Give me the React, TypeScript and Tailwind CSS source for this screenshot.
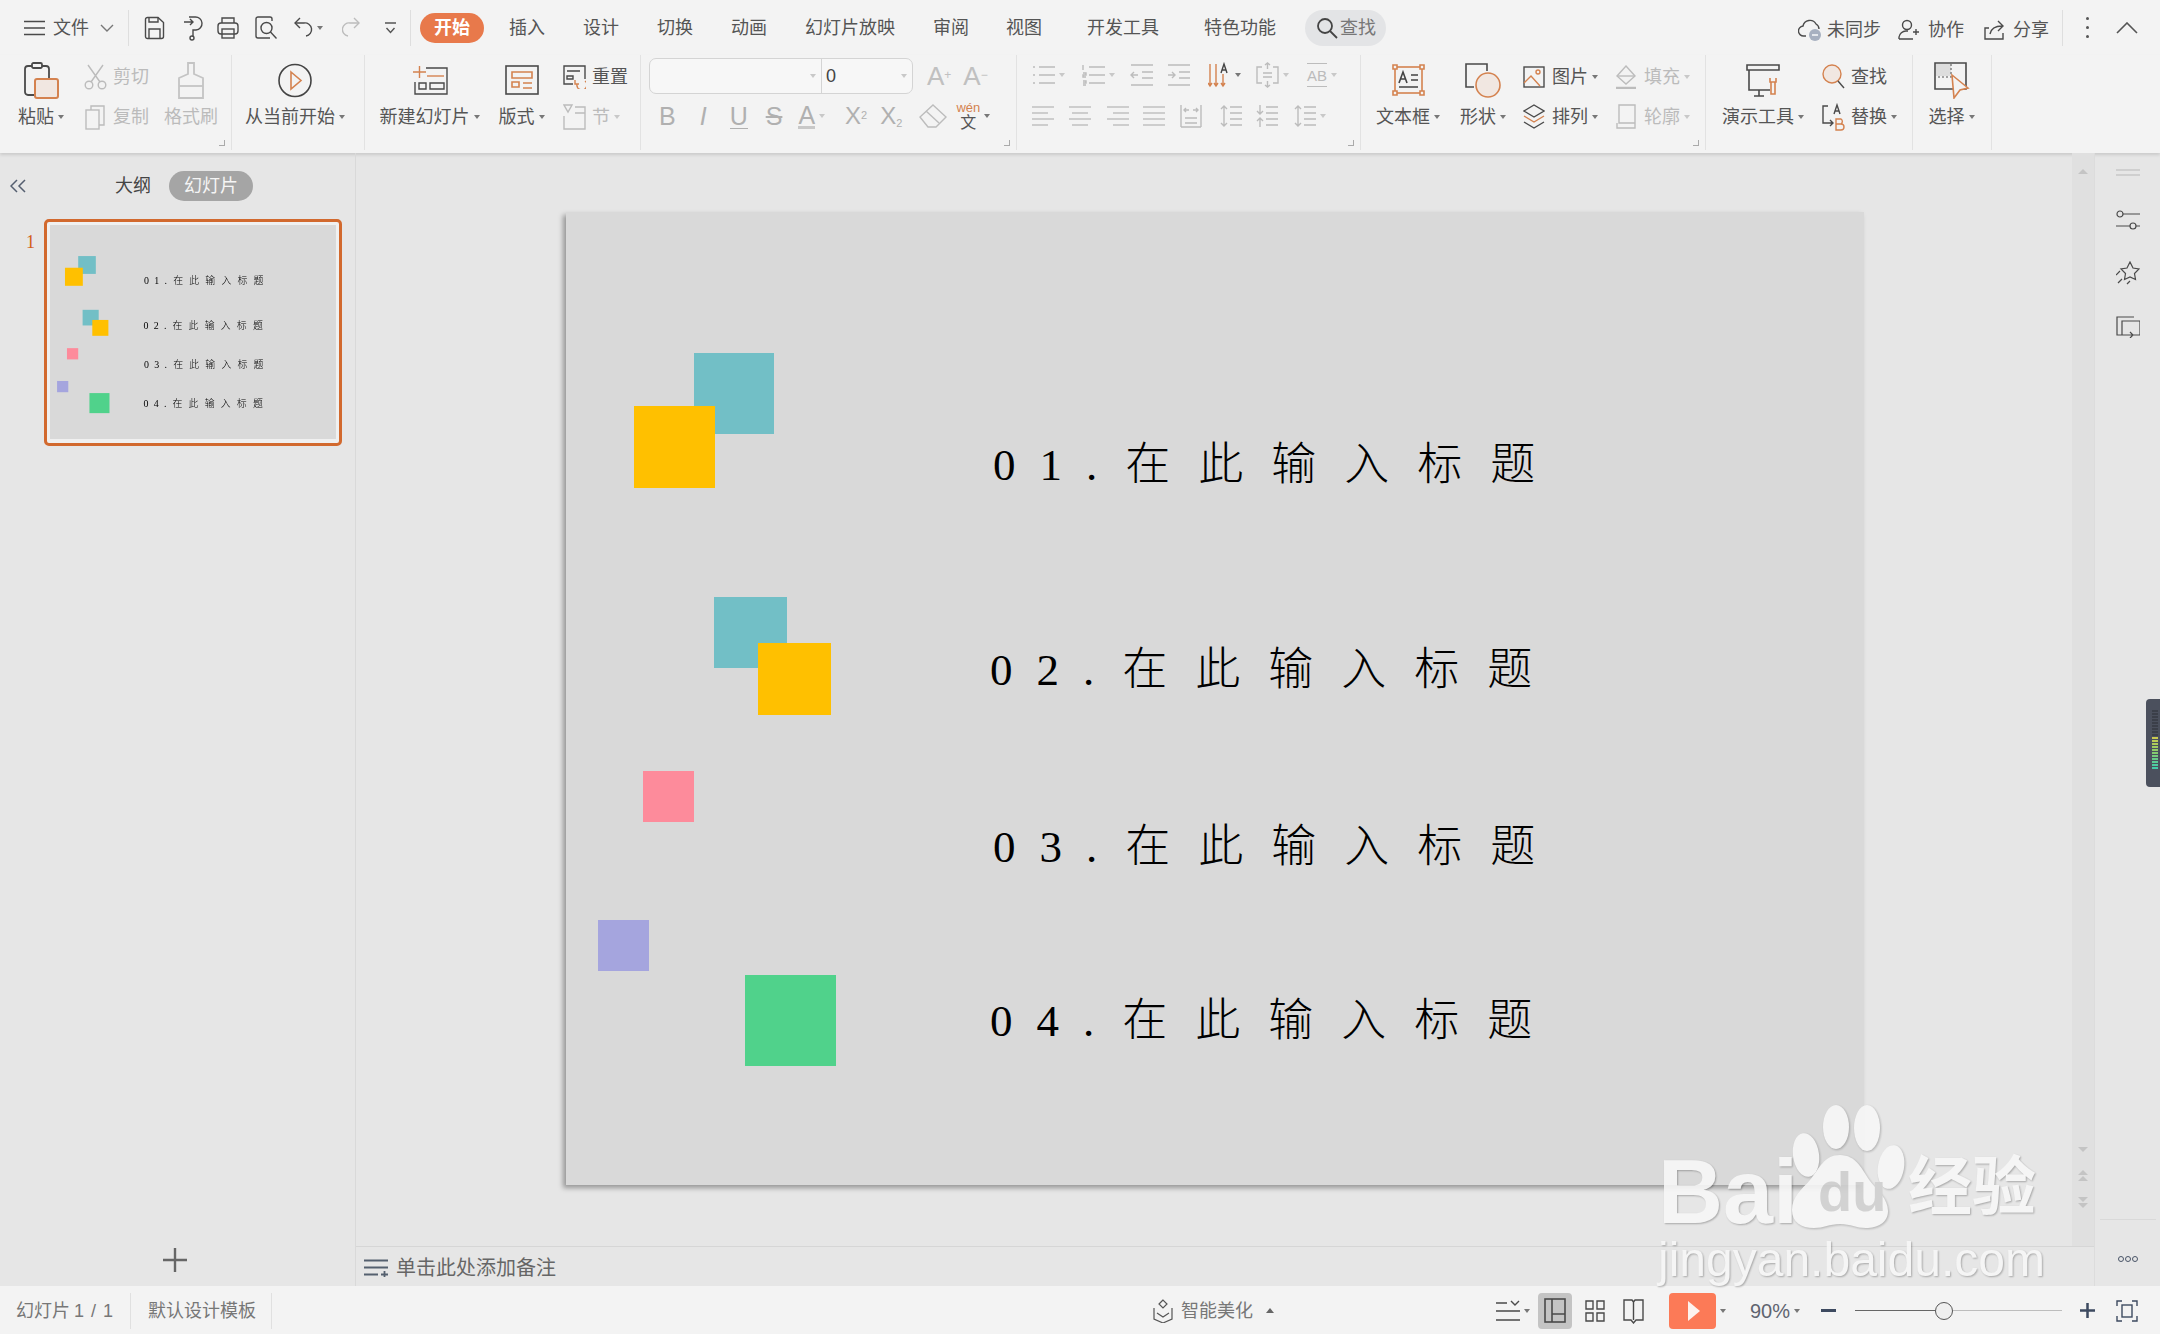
import type { ReactNode } from 'react';

const DARK = '#4a4a4a';
const GRAY = '#bcbcbc';
const ORANGE = '#d4824f';

function Ico({ w, h, c = DARK, sw = 1.4, children }: { w: number; h: number; c?: string; sw?: number; children: ReactNode }) {
  return (
    <svg width={w} height={h} viewBox={`0 0 ${w} ${h}`} fill="none" stroke={c} strokeWidth={sw} className="shrink-0">
      {children}
    </svg>
  );
}

function Caret({ gray }: { gray?: boolean }) {
  return (
    <span
      className={
        gray
          ? 'ml-[4px] inline-block shrink-0 border-x-[3.5px] border-t-[4px] border-x-transparent border-t-[#c8c8c8]'
          : 'ml-[4px] inline-block shrink-0 border-x-[3.5px] border-t-[4px] border-x-transparent border-t-[#777777]'
      }
    />
  );
}

function Corner() {
  return <span className="absolute bottom-[4px] right-[6px] h-[6px] w-[6px] border-b border-r border-[#aaaaaa]" />;
}

function Large({ icon, label, w, gray, caret = true, className = '' }: { icon: ReactNode; label: string; w: string; gray?: boolean; caret?: boolean; className?: string }) {
  return (
    <div className={`flex flex-col items-center ${w} ${className}`}>
      <div className="mt-[2px] flex h-[46px] items-center justify-center">{icon}</div>
      <div className={gray ? 'flex h-[28px] items-center whitespace-nowrap text-[#bbbbbb]' : 'flex h-[28px] items-center whitespace-nowrap text-[#555555]'}>
        {label}
        {caret && <Caret />}
      </div>
    </div>
  );
}

function Small({ icon, label, gray, caret }: { icon: ReactNode; label: string; gray?: boolean; caret?: boolean }) {
  return (
    <div className={gray ? 'flex h-[34px] items-center gap-[7px] text-[#bbbbbb]' : 'flex h-[34px] items-center gap-[7px] text-[#555555]'}>
      <span className="flex w-[22px] justify-center">{icon}</span>
      <span className="flex items-center whitespace-nowrap">
        {label}
        {caret && <Caret gray={gray} />}
      </span>
    </div>
  );
}

function SmallCol({ children, className = '' }: { children: ReactNode; className?: string }) {
  return <div className={`flex flex-col gap-[6px] pt-[5px] ${className}`}>{children}</div>;
}

function Lines({ rows, c = GRAY, w = 22 }: { rows: [number, number][]; c?: string; w?: number }) {
  return (
    <Ico w={w} h={24} c={c}>
      {rows.map(([a, b], i) => (
        <path key={i} d={`M${a} ${3 + i * (18 / (rows.length - 1))}H${b}`} />
      ))}
    </Ico>
  );
}

const SAVE = (
  <Ico w={21} h={24}>
    <path d="M4 1.5h10l5.5 5v14a2 2 0 0 1-2 2h-14a2 2 0 0 1-2-2v-17a2 2 0 0 1 2-2z" />
    <path d="M5 1.5v4.5h9V1.5M5 22v-9h11v9" />
  </Ico>
);

const OUTPUT = (
  <Ico w={21} h={26}>
    <path d="M1 7h9M7 4l3 3-3 3" />
    <path d="M6 2h6a6.500 6.500 0 0 1 1 13h-3v7" />
    <circle cx={9} cy={23} r={2} />
  </Ico>
);

const PRINT = (
  <Ico w={22} h={24}>
    <path d="M5 7V2h12v5" />
    <rect x={1} y={7} width={20} height={11} rx={3} />
    <rect x={5} y={13} width={12} height={9} />
  </Ico>
);

const PREVIEW = (
  <Ico w={24} h={24}>
    <path d="M16 22H4a2 2 0 0 1-2-2V3a2 2 0 0 1 2-2h12a2 2 0 0 1 2 2v2" />
    <circle cx={12.5} cy={12} r={5.5} />
    <path d="M16.500 16l6 6.500" />
  </Ico>
);

const UNDO = (
  <Ico w={20} h={24}>
    <path d="M7 2L2 7l5 5" />
    <path d="M2 7h9a6.500 6.500 0 0 1 2 13" />
  </Ico>
);

const REDO = (
  <Ico w={18} h={24} c={GRAY}>
    <path d="M12 2l5 5-5 5" />
    <path d="M17 7H8a6 6 0 0 0-2 13" />
  </Ico>
);

export default function App() {
  return (
    <div className="relative flex h-[1334px] w-[2160px] flex-col overflow-hidden bg-[#e6e6e6] font-['Liberation_Sans','Noto_Sans_CJK_SC',sans-serif] text-[18px] leading-none text-[#555555]">
      <TitleRow />
      <Ribbon />
      <div className="flex min-h-0 flex-1">
        <LeftPanel />
        <div className="flex min-w-0 flex-1 flex-col">
          <div className="flex min-h-0 flex-1">
            <div className="flex-1 pl-[210px] pt-[59px]">
              <div className="w-fit shadow-[-3px_3px_5px_rgba(0,0,0,0.35)]">
                <Slide />
              </div>
            </div>
            <ScrollBar />
          </div>
          <div className="flex h-[40px] items-center gap-[8px] border-t border-[#d6d6d6] pl-[8px] pt-[2px] text-[20px] text-[#666666]">
            <Ico w={24} h={18} c="#55606f" sw={1.8}>
              <path d="M0 1.500h24M0 8.500h24M0 15.500h14M17 15.500h7M20.500 12v7" />
            </Ico>
            单击此处添加备注
          </div>
        </div>
        <SidePanel />
      </div>
      <StatusBar />
      <Watermark />
      <div className="absolute left-[2146px] top-[699px] flex h-[88px] w-[14px] flex-col gap-[1px] rounded-l-[4px] bg-[#4b505d] pl-[6px] pt-[11px]">
        {['#3b3f49', '#3b3f49', '#3b3f49', '#3b3f49', '#3b3f49', '#3b3f49', '#3b3f49', '#3b3f49', '#3b3f49', '#c9c950', '#bccb55', '#aecb5a', '#a0cc60', '#92cc68', '#84cc70', '#76cc7c', '#68cc88', '#5acb94', '#4ecba0', '#44caa8'].map((color, i) => (
          <span key={i} className="h-[2px] w-[6px] shrink-0" style={{ backgroundColor: color }} />
        ))}
      </div>
    </div>
  );
}

function TitleRow() {
  return (
    <div className="flex h-[55px] shrink-0 items-center bg-[#f3f3f3] pl-[24px] pr-[22px]">
      <Ico w={21} h={16} sw={1.6}>
        <path d="M0 1.500h21M0 8h21M0 14.500h21" />
      </Ico>
      <span className="ml-[8px]">文件</span>
      <span className="ml-[11px]">
        <Ico w={14} h={8} c="#777777">
          <path d="M1 1l6 6 6-6" />
        </Ico>
      </span>
      <span className="ml-[14px] h-[36px] w-px bg-[#dedede]" />
      <span className="ml-[15px]">{SAVE}</span>
      <span className="ml-[18px]">{OUTPUT}</span>
      <span className="ml-[13px]">{PRINT}</span>
      <span className="ml-[15px]">{PREVIEW}</span>
      <span className="ml-[15px]">{UNDO}</span>
      <Caret />
      <span className="ml-[19px]">{REDO}</span>
      <span className="ml-[25px]">
        <Ico w={11} h={16} c="#555555">
          <path d="M0 3h11M1.500 8l4 4.500 4-4.500" />
        </Ico>
      </span>
      <span className="ml-[14px] h-[36px] w-px bg-[#dedede]" />
      <span className="ml-[9px] flex h-[30px] w-[64px] items-center justify-center rounded-full bg-[#e8794b] font-bold text-white">开始</span>
      <span className="ml-[25px]">插入</span>
      <span className="ml-[38px]">设计</span>
      <span className="ml-[38px]">切换</span>
      <span className="ml-[38px]">动画</span>
      <span className="ml-[38px]">幻灯片放映</span>
      <span className="ml-[38px]">审阅</span>
      <span className="ml-[37px]">视图</span>
      <span className="ml-[45px]">开发工具</span>
      <span className="ml-[45px]">特色功能</span>
      <span className="ml-[29px] flex h-[36px] w-[81px] items-center gap-[2px] rounded-full bg-[#e3e4e6] pl-[11px] text-[#777777]">
        <Ico w={22} h={22} c="#444444" sw={1.8}>
          <circle cx={9} cy={9} r={7} />
          <path d="M14 14l7 7" />
        </Ico>
        查找
      </span>
      <span className="ml-auto flex items-center pt-[4px]">
        <Ico w={25} h={25}>
          <path d="M8 19H6a5 5 0 0 1-1-10 7 7 0 0 1 13-2 6 6 0 0 1 3 5" />
          <circle cx={17} cy={18} r={6} fill="#a7b0c0" stroke="none" />
          <path d="M14 18h6" stroke="#ffffff" />
        </Ico>
        <span className="ml-[4px]">未同步</span>
        <span className="ml-[17px]">
          <Ico w={21} h={21}>
            <circle cx={9} cy={6} r={4.5} />
            <path d="M1 20v-2a7 7 0 0 1 7-6h2M15 13h6M18 10v6M1 20h14" />
          </Ico>
        </span>
        <span className="ml-[9px]">协作</span>
        <span className="ml-[20px]">
          <Ico w={21} h={21}>
            <path d="M5 9H1v11h18v-6" />
            <path d="M6 15c1-5 5-8 12-8M14 2l5 5-5 5" />
          </Ico>
        </span>
        <span className="ml-[8px]">分享</span>
      </span>
      <span className="ml-[13px] h-[36px] w-px bg-[#dedede]" />
      <span className="ml-[23px] flex flex-col gap-[6px]">
        <span className="h-[3px] w-[3px] rounded-full bg-[#555555]" />
        <span className="h-[3px] w-[3px] rounded-full bg-[#555555]" />
        <span className="h-[3px] w-[3px] rounded-full bg-[#555555]" />
      </span>
      <span className="ml-[27px]">
        <Ico w={22} h={12} c="#555555" sw={1.6}>
          <path d="M1 11L11 1l10 10" />
        </Ico>
      </span>
    </div>
  );
}

function Ribbon() {
  return (
    <div className="flex h-[98px] shrink-0 bg-[#f3f3f3] pb-[3px] shadow-[0_2px_3px_rgba(0,0,0,0.12)]">
      {/* clipboard */}
      <div className="relative flex w-[232px] border-r border-[#e2e2e2] pl-[18px]">
        <Large
          w="w-[46px]"
          label="粘贴"
          icon={
            <Ico w={35} h={37} sw={1.8}>
              <rect x={1} y={4} width={24} height={29} rx={3} />
              <rect x={8} y={1} width={10} height={5} rx={1.5} fill="#f3f3f3" />
              <rect x={11} y={17} width={23} height={19} rx={2} fill="#f1e7e1" stroke={ORANGE} strokeWidth={2} />
            </Ico>
          }
        />
        <SmallCol className="ml-[20px]">
          <Small
            gray
            label="剪切"
            icon={
              <Ico w={23} h={26} c={GRAY}>
                <circle cx={5} cy={21} r={3.8} />
                <circle cx={18} cy={21} r={3.8} />
                <path d="M7 18L19 1M16 18L4 1" />
              </Ico>
            }
          />
          <Small
            gray
            label="复制"
            icon={
              <Ico w={20} h={25} c={GRAY}>
                <path d="M6 5V1h13v19h-5" />
                <rect x={1} y={5} width={13} height={19} />
              </Ico>
            }
          />
        </SmallCol>
        <Large
          gray
          caret={false}
          w="w-[54px]"
          className="ml-[15px]"
          label="格式刷"
          icon={
            <Ico w={28} h={37} c="#c4c4c4" sw={1.8}>
              <path d="M11 1h6v11l9 4v20H2V16l9-4z" />
              <path d="M2 24h24" />
            </Ico>
          }
        />
        <Corner />
      </div>
      {/* start */}
      <div className="flex w-[133px] border-r border-[#e2e2e2] pl-[14px]">
        <Large
          w="w-[98px]"
          label="从当前开始"
          icon={
            <Ico w={34} h={35} c="#444444" sw={1.6}>
              <circle cx={17} cy={17.5} r={16} />
              <path d="M13 9l10 8.500-10 8.500z" stroke={ORANGE} />
            </Ico>
          }
        />
      </div>
      {/* slides */}
      <div className="flex w-[276px] border-r border-[#e2e2e2] pl-[13px]">
        <Large
          w="w-[103px]"
          label="新建幻灯片"
          icon={
            <Ico w={36} h={30}>
              <path d="M1 7h13M7.500 1v12" stroke={ORANGE} />
              <path d="M14 3h21v26H3V17" />
              <path d="M15 11h17" stroke={ORANGE} />
              <path d="M7 18h7v6H7zM18 18h14v6H18z" />
            </Ico>
          }
        />
        <Large
          w="w-[49px]"
          className="ml-[16px]"
          label="版式"
          icon={
            <Ico w={34} h={30} sw={1.6}>
              <rect x={1} y={1} width={32} height={28} />
              <path d="M7 7h20v6H7zM7 17h7v5H7zM18 18h9M18 23h9" stroke={ORANGE} />
            </Ico>
          }
        />
        <SmallCol className="ml-[17px]">
          <Small
            label="重置"
            icon={
              <Ico w={23} h={24}>
                <path d="M10 19H1V1h21v13" />
                <path d="M4 6h13M4 11h6v3H4z" />
                <path d="M22 16a5 5 0 1 1-8 3M12 15v4h4" stroke={ORANGE} />
              </Ico>
            }
          />
          <Small
            gray
            caret
            label="节"
            icon={
              <Ico w={23} h={26} c={GRAY}>
                <path d="M1 1h8L5 8zM12 3h10v22H1V12M12 9h10" />
              </Ico>
            }
          />
        </SmallCol>
      </div>
      {/* font */}
      <div className="relative w-[376px] border-r border-[#e2e2e2] pl-[8px]">
        <div className="mt-[3px] flex h-[36px] items-center">
          <div className="flex h-full w-[264px] rounded-[7px] border border-[#d4d4d4] bg-[#f7f7f7]">
            <div className="flex w-[172px] items-center justify-end border-r border-[#d4d4d4] pr-[5px]">
              <Caret gray />
            </div>
            <div className="flex flex-1 items-center justify-between pl-[4px] pr-[5px] text-[#444444]">
              0<Caret gray />
            </div>
          </div>
          <span className="ml-[14px] text-[26px] font-light text-[#c0c0c0]">
            A<sup className="text-[12px]">+</sup>
          </span>
          <span className="ml-[12px] text-[26px] font-light text-[#c0c0c0]">
            A<sup className="text-[12px]">−</sup>
          </span>
        </div>
        <div className="mt-[5px] flex h-[34px] items-center pl-[10px] text-[25px] text-[#b0b0b0]">
          <span>B</span>
          <span className="ml-[24px] italic">I</span>
          <span className="ml-[23px] border-b border-[#b0b0b0] leading-[24px]">U</span>
          <span className="ml-[18px] line-through">S</span>
          <span className="ml-[16px] border-b-[3px] border-[#c8c8c8] leading-[22px]">A</span>
          <Caret gray />
          <span className="ml-[20px] text-[24px]">
            X<sup className="text-[11px]">2</sup>
          </span>
          <span className="ml-[13px] text-[24px]">
            X<sub className="text-[11px]">2</sub>
          </span>
          <span className="ml-[16px]">
            <Ico w={29} h={26} c={GRAY}>
              <path d="M15 2l13 12-10 10H10L2 14z" />
              <path d="M8 8l13 12" />
            </Ico>
          </span>
          <span className="ml-[9px] flex w-[24px] flex-col items-center">
            <span className="text-[13px] text-[#d4824f]">wén</span>
            <span className="mt-[1px] text-[16px] text-[#555555]">文</span>
          </span>
          <Caret />
        </div>
        <Corner />
      </div>
      {/* paragraph */}
      <div className="relative w-[344px] border-r border-[#e2e2e2] pl-[15px]">
        <div className="flex h-[34px] items-center pt-[6px]">
          <Ico w={23} h={24} c={GRAY}>
            <path d="M7 4h16M7 12h16M7 20h16M1 4h2M1 12h2M1 20h2" />
          </Ico>
          <Caret gray />
          <span className="ml-[17px]">
            <Ico w={23} h={24} c={GRAY}>
              <path d="M7 4h16M7 12h16M7 20h16M1 2v5M1 10h3v2H1v2h3M1 18h3v2H1M1 22h3" />
            </Ico>
          </span>
          <Caret gray />
          <span className="ml-[15px]">
            <Ico w={23} h={24} c={GRAY}>
              <path d="M1 2h22M12 9h11M12 15h11M1 22h22M8 12H1M4 9l-3 3 3 3" />
            </Ico>
          </span>
          <span className="ml-[14px]">
            <Ico w={23} h={24} c={GRAY}>
              <path d="M1 2h22M12 9h11M12 15h11M1 22h22M1 12h7M5 9l3 3-3 3" />
            </Ico>
          </span>
          <span className="ml-[18px]">
            <Ico w={23} h={26} c={ORANGE}>
              <path d="M2 2v22M0 21l2 3 2-3M8 2v22M6 21l2 3 2-3M15 12v12M13 21l2 3 2-3" />
              <path d="M13 11l3-9 3 9M14 8h4" stroke="#444444" />
            </Ico>
          </span>
          <Caret />
          <span className="ml-[15px]">
            <Ico w={23} h={26} c={GRAY}>
              <path d="M6 5H1v16h5M17 5h5v16h-5M7 11h9M7 15h9M11.500 1v6M9 3l2.500-2 2.500 2M11.500 19v6M9 23l2.500 2 2.500-2" />
            </Ico>
          </span>
          <Caret gray />
          <span className="ml-[18px] flex h-[24px] flex-col justify-center border-y border-[#bcbcbc] text-[15px] text-[#bbbbbb]">AB</span>
          <Caret gray />
        </div>
        <div className="mt-[10px] flex h-[34px] items-center">
          <Lines rows={[[0, 22], [0, 16], [0, 22], [0, 16]]} />
          <span className="ml-[15px]">
            <Lines rows={[[0, 22], [3, 19], [0, 22], [3, 19]]} />
          </span>
          <span className="ml-[16px]">
            <Lines rows={[[0, 22], [6, 22], [0, 22], [6, 22]]} />
          </span>
          <span className="ml-[14px]">
            <Lines rows={[[0, 22], [0, 22], [0, 22], [0, 22]]} />
          </span>
          <span className="ml-[15px]">
            <Ico w={22} h={24} c={GRAY}>
              <path d="M1 1v22M21 1v22M1 23h20M5 14h12M5 19h12M4 6h5M6 4L4 6l2 2M13 6h5M16 4l2 2-2 2" />
            </Ico>
          </span>
          <span className="ml-[18px]">
            <Ico w={22} h={24} c={GRAY}>
              <path d="M10 3h12M10 9h12M10 15h12M10 21h12M4 2v20M1 5l3-3 3 3M1 19l3 3 3-3" />
            </Ico>
          </span>
          <span className="ml-[14px]">
            <Ico w={22} h={24} c={GRAY}>
              <path d="M10 3h12M10 9h12M10 15h12M10 21h12M4 1v9M1 7l3 3 3-3M4 14v9M1 17l3-3 3 3" />
            </Ico>
          </span>
          <span className="ml-[16px]">
            <Ico w={22} h={24} c={GRAY}>
              <path d="M10 3h12M10 9h12M10 15h12M10 21h12M4 2v20M1 5l3-3 3 3M1 19l3 3 3-3" />
            </Ico>
          </span>
          <Caret gray />
        </div>
        <Corner />
      </div>
      {/* insert */}
      <div className="relative flex w-[345px] border-r border-[#e2e2e2] pl-[12px]">
        <Large
          w="w-[70px]"
          label="文本框"
          icon={
            <Ico w={33} h={32} c={ORANGE} sw={1.6}>
              <rect x={3} y={3} width={27} height={26} />
              <path d="M1 1h4v4H1zM28 1h4v4h-4zM1 27h4v4H1zM28 27h4v4h-4z" fill="#f3f3f3" />
              <path d="M7 19l4-11 4 11M8.500 15h5M19 11h7M19 16h7M7 23h19" stroke="#444444" />
            </Ico>
          }
        />
        <Large
          w="w-[50px]"
          className="ml-[15px]"
          label="形状"
          icon={
            <Ico w={37} h={35} sw={1.6}>
              <path d="M22 8V1H1v23h8" />
              <ellipse cx={23} cy={22} rx={12} ry={12} fill="#f1e7e1" stroke={ORANGE} />
            </Ico>
          }
        />
        <SmallCol className="ml-[15px] w-[80px]">
          <Small
            caret
            label="图片"
            icon={
              <Ico w={22} h={24}>
                <rect x={1} y={2} width={20} height={20} />
                <path d="M1 18l7-7 9 10" stroke={ORANGE} />
                <circle cx={15} cy={7} r={2} stroke={ORANGE} />
              </Ico>
            }
          />
          <Small
            caret
            label="排列"
            icon={
              <Ico w={22} h={26}>
                <path d="M11 1l10 6-10 6L1 7z" />
                <path d="M1 12l10 6 10-6" stroke={ORANGE} />
                <path d="M1 18l10 6 10-6" />
              </Ico>
            }
          />
        </SmallCol>
        <SmallCol className="ml-[12px]">
          <Small
            gray
            caret
            label="填充"
            icon={
              <Ico w={22} h={24} c={GRAY}>
                <path d="M11 1l9 10-9 8-9-8z" />
                <path d="M2 11h18" />
                <path d="M1 23h20" strokeWidth={2.5} />
              </Ico>
            }
          />
          <Small
            gray
            caret
            label="轮廓"
            icon={
              <Ico w={22} h={26} c={GRAY}>
                <path d="M4 1h16v18H4zM2 19v5h18v-5M4 19h16" />
              </Ico>
            }
          />
        </SmallCol>
        <Corner />
      </div>
      {/* tools */}
      <div className="flex w-[207px] border-r border-[#e2e2e2] pl-[15px]">
        <Large
          w="w-[84px]"
          label="演示工具"
          icon={
            <Ico w={34} h={33} sw={1.6}>
              <path d="M1 1h32v5H1zM3 6v20h21M13 26v6M8 32h10" />
              <path d="M24 14v4h6v-4M25 18v12h4V18" stroke={ORANGE} />
            </Ico>
          }
        />
        <SmallCol className="ml-[17px]">
          <Small
            label="查找"
            icon={
              <Ico w={23} h={26}>
                <circle cx={10} cy={10} r={9} fill="#f1e7e1" stroke={ORANGE} />
                <path d="M16 17l6 7" />
              </Ico>
            }
          />
          <Small
            caret
            label="替换"
            icon={
              <Ico w={23} h={28}>
                <path d="M6 3H1v17h10M8 17l3 3-3 3M12 11l3-9 3 9M13 8h4" />
                <path d="M14 16h5a3 3 0 0 1 0 5h-5zM14 21h5a3 3 0 0 1 0 6h-5z" stroke={ORANGE} />
              </Ico>
            }
          />
        </SmallCol>
      </div>
      {/* select */}
      <div className="flex w-[79px] border-r border-[#e2e2e2] pl-[15px]">
        <Large
          w="w-[47px]"
          label="选择"
          icon={
            <Ico w={36} h={37} sw={1.6}>
              <path d="M1 1h31v26H1z" />
              <rect x={2} y={2} width={15} height={12} fill="#dddddd" stroke="none" />
              <path d="M17 2v13H2" strokeDasharray="2 2" stroke="#888888" />
              <path d="M18 13l16 13-8 2-6 8z" fill="#f3f3f3" stroke={ORANGE} />
            </Ico>
          }
        />
      </div>
    </div>
  );
}

function LeftPanel() {
  return (
    <div className="flex w-[356px] shrink-0 flex-col border-r border-[#d9d9d9]">
      <div className="mt-[18px] flex h-[30px] items-center pl-[10px]">
        <Ico w={16} h={14} c="#555f70" sw={1.5}>
          <path d="M7 1L1 7l6 6M15 1L9 7l6 6" />
        </Ico>
        <span className="ml-[89px] text-[#444444]">大纲</span>
        <span className="ml-[18px] flex h-[30px] w-[84px] items-center justify-center rounded-full bg-[#a5a5a5] text-[#f5f5f5]">幻灯片</span>
      </div>
      <div className="mt-[18px] flex">
        <span className="w-[44px] pl-[26px] pt-[14px] font-['Liberation_Serif',serif] text-[18px] text-[#d2601a]">1</span>
        <div className="h-[227px] w-[298px] rounded-[5px] border-[3px] border-[#d2692e] bg-[#f0f0f0] p-[3px]">
          <div className="h-[214px] w-[286px] overflow-hidden">
            <div className="origin-top-left scale-[0.2203]">
              <Slide />
            </div>
          </div>
        </div>
      </div>
      <div className="mt-auto flex justify-center pb-[14px] pr-[5px]">
        <Ico w={24} h={24} c="#666666" sw={2.4}>
          <path d="M12 0v24M0 12h24" />
        </Ico>
      </div>
    </div>
  );
}

const TITLE = "absolute flex h-[60px] items-center whitespace-nowrap font-['Liberation_Serif','Noto_Sans_CJK_SC',serif] text-[45px] font-light tracking-[28px] text-[#000000]";

function Slide() {
  return (
    <div className="relative h-[973px] w-[1298px] bg-[#d9d9d9]">
      <div className="absolute left-[128px] top-[141px] h-[81px] w-[80px] bg-[#72bfc6]" />
      <div className="absolute left-[68px] top-[194px] h-[82px] w-[81px] bg-[#ffc000]" />
      <div className="absolute left-[148px] top-[385px] h-[71px] w-[73px] bg-[#72bfc6]" />
      <div className="absolute left-[192px] top-[431px] h-[72px] w-[73px] bg-[#ffc000]" />
      <div className="absolute left-[77px] top-[559px] h-[51px] w-[51px] bg-[#fd8b9b]" />
      <div className="absolute left-[32px] top-[708px] h-[51px] w-[51px] bg-[#a5a5de]" />
      <div className="absolute left-[179px] top-[763px] h-[91px] w-[91px] bg-[#50d28b]" />
      <div className={`${TITLE} left-[427px] top-[223px]`}>
        <span className="tracking-[24px]">01</span>.在此输入标题
      </div>
      <div className={`${TITLE} left-[424px] top-[428px]`}>
        <span className="tracking-[24px]">02</span>.在此输入标题
      </div>
      <div className={`${TITLE} left-[427px] top-[605px]`}>
        <span className="tracking-[24px]">03</span>.在此输入标题
      </div>
      <div className={`${TITLE} left-[424px] top-[779px]`}>
        <span className="tracking-[24px]">04</span>.在此输入标题
      </div>
    </div>
  );
}

function ScrollBar() {
  return (
    <div className="flex w-[22px] shrink-0 flex-col items-center bg-[#e0e0e0] pt-[16px]">
      <span className="border-x-[5px] border-b-[5px] border-x-transparent border-b-[#c4c4c4]" />
      <div className="mt-auto flex flex-col items-center pb-[38px]">
        <span className="border-x-[5px] border-t-[5px] border-x-transparent border-t-[#c4c4c4]" />
        <span className="mt-[18px] border-x-[5px] border-b-[5px] border-x-transparent border-b-[#c4c4c4]" />
        <span className="mt-[1px] border-x-[5px] border-b-[5px] border-x-transparent border-b-[#c4c4c4]" />
        <span className="mt-[16px] border-x-[5px] border-t-[5px] border-x-transparent border-t-[#c4c4c4]" />
        <span className="mt-[1px] border-x-[5px] border-t-[5px] border-x-transparent border-t-[#c4c4c4]" />
      </div>
    </div>
  );
}

function SidePanel() {
  return (
    <div className="flex w-[66px] shrink-0 flex-col items-center border-l border-[#dcdcdc]">
      <div className="mt-[16px]">
        <Ico w={24} h={7} c="#c8c8c8" sw={1.6}>
          <path d="M0 1h24M0 6h24" />
        </Ico>
      </div>
      <div className="mt-[34px]">
        <Ico w={24} h={20} sw={1.2}>
          <circle cx={4} cy={4} r={3} />
          <path d="M7 4h17M0 16h14M20 16h4" />
          <circle cx={17} cy={16} r={3} />
        </Ico>
      </div>
      <div className="mt-[31px]">
        <Ico w={24} h={24} sw={1.2}>
          <path d="M14 1l3 6 6 1-4.500 4.500 1 6L14 16l-5.500 2.500 1-6L5 8l6-1z" />
          <path d="M4 10L0 14M6 18l-4 4M14 20l-3 3" />
        </Ico>
      </div>
      <div className="mt-[31px]">
        <Ico w={24} h={22} sw={1.2}>
          <path d="M18 1H1v18h15M17 19h7V5H6v14M14 16l3 3-3 3" />
        </Ico>
      </div>
      <div className="mt-auto flex w-full flex-col items-center pb-[24px]">
        <span className="mb-[36px] h-px w-[56px] bg-[#d9d9d9]" />
        <span className="flex gap-[1px]">
          <span className="h-[6px] w-[6px] rounded-full border border-[#4a5568]" />
          <span className="h-[6px] w-[6px] rounded-full border border-[#4a5568]" />
          <span className="h-[6px] w-[6px] rounded-full border border-[#4a5568]" />
        </span>
      </div>
    </div>
  );
}

function StatusBar() {
  return (
    <div className="flex h-[48px] shrink-0 items-center bg-[#f3f3f3] pt-[1px] text-[#777777]">
      <span className="ml-[16px] flex h-[36px] w-[115px] items-center gap-[4px] border-r border-[#e0e0e0]">
        幻灯片
        <span className="tracking-[1px]">1 / 1</span>
      </span>
      <span className="ml-[17px] flex h-[36px] w-[124px] items-center border-r border-[#e0e0e0]">默认设计模板</span>
      <span className="ml-[881px]">
        <Ico w={20} h={24} c="#555555" sw={1.2}>
          <path d="M10 1l-4 4 4 4 4-4zM1 9v11l9 4 9-4V9M4 14l6 4 6-4" />
        </Ico>
      </span>
      <span className="ml-[8px]">智能美化</span>
      <span className="ml-[13px] border-x-[4px] border-b-[5px] border-x-transparent border-b-[#666666]" />
      <span className="ml-[222px]">
        <Ico w={24} h={24} sw={1.4}>
          <path d="M0 4h11M0 12h24M0 21h24M15 2l4 4 4-4" />
        </Ico>
      </span>
      <Caret />
      <span className="ml-[8px] flex h-[36px] w-[34px] items-center justify-center rounded-[4px] bg-[#c4c4c4]">
        <Ico w={22} h={25} sw={1.6}>
          <rect x={1} y={1} width={20} height={23} />
          <path d="M8 1v23M8 16h13" />
        </Ico>
      </span>
      <span className="ml-[13px]">
        <Ico w={20} h={24}>
          <path d="M1 2h7v8H1zM12 2h7v8h-7zM1 14h7v8H1zM12 14h7v8h-7z" />
        </Ico>
      </span>
      <span className="ml-[18px]">
        <Ico w={21} h={26}>
          <path d="M1 2h8l1.500 2L12 2h8v20h-7l-2.500 3L8 22H1zM10.500 4v18" />
        </Ico>
      </span>
      <span className="ml-[25px] flex h-[36px] w-[47px] items-center justify-center rounded-[4px] bg-[#fc7a57]">
        <span className="ml-[2px] border-y-[10px] border-l-[12px] border-y-transparent border-l-[#fdf3ee]" />
      </span>
      <Caret />
      <span className="ml-[24px] text-[20px] font-light text-[#5f6470]">90%</span>
      <Caret />
      <span className="ml-[21px] h-[3px] w-[15px] bg-[#3d4a60]" />
      <span className="ml-[19px] h-px w-[80px] bg-[#666666]" />
      <span className="h-[18px] w-[18px] shrink-0 rounded-full border border-[#555555] bg-[#efefef]" />
      <span className="h-px w-[109px] bg-[#bdbdbd]" />
      <span className="ml-[18px]">
        <Ico w={15} h={15} c="#3d4a60" sw={2.5}>
          <path d="M0 7.500h15M7.500 0v15" />
        </Ico>
      </span>
      <span className="ml-[21px]">
        <Ico w={22} h={22} c="#3d4a60" sw={1.4}>
          <path d="M1 6V1h5M16 1h5v5M21 16v5h-5M6 21H1v-5" />
          <rect x={6} y={5} width={10} height={12} />
        </Ico>
      </span>
    </div>
  );
}

const WM = 'absolute whitespace-nowrap text-[#f7f7f7] [text-shadow:1px_1px_2px_rgba(0,0,0,0.3)]';

function Watermark() {
  return (
    <div className="pointer-events-none absolute left-[1658px] top-[1105px] h-[185px] w-[390px] opacity-90">
      <span className={`${WM} left-0 top-[42px] text-[90px] font-bold`}>Bai</span>
      <svg width={118} height={124} viewBox="0 0 118 124" fill="#f7f7f7" className="absolute left-[134px] top-0 drop-shadow-[1px_1px_1px_rgba(0,0,0,0.25)]">
        <ellipse cx={14} cy={50} rx={13} ry={22} transform="rotate(-8 14 50)" />
        <ellipse cx={44} cy={22} rx={13} ry={22} />
        <ellipse cx={75} cy={23} rx={13} ry={23} />
        <ellipse cx={99} cy={62} rx={13} ry={22} transform="rotate(10 99 62)" />
        <path d="M48 50c16 0 22 14 30 26 8 10 18 18 18 30 0 12-11 17-22 17-10 0-15-4-26-4s-16 4-26 4c-13 0-22-6-22-18 0-13 9-20 18-30 9-11 14-25 30-25z" />
      </svg>
      <span className="absolute left-[160px] top-[59px] text-[56px] font-bold text-[#d0d0d0]">du</span>
      <span className={`${WM} left-[250px] top-[50px] text-[64px] font-bold`}>经验</span>
      <span className={`${WM} left-0 top-[131px] text-[48px]`}>jingyan.baidu.com</span>
    </div>
  );
}
